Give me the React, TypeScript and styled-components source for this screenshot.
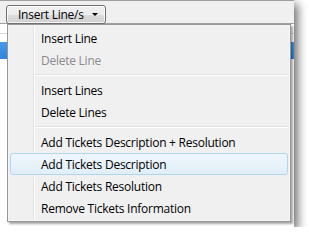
import * as React from "react";
import styled, { createGlobalStyle } from "styled-components";

const GlobalStyle = createGlobalStyle`
  html, body {
    margin: 0;
    padding: 0;
    background: #ffffff;
  }
  body {
    font-family: "Open Sans", "Noto Sans", sans-serif;
    font-size: 12px;
    letter-spacing: -0.25px;
  }
`;

const Window = styled.div`
  position: relative;
  width: 294px;
  height: 227px;
  background: #ffffff;
  box-shadow: 4px 4px 9px rgba(0, 0, 0, 0.55);
`;

const Toolbar = styled.div`
  display: flex;
  align-items: flex-start;
  height: 24px;
  box-sizing: border-box;
  padding: 4px 0 0 6px;
  background: #f0f0f0;
  border-top: 1px solid #a0a0a0;
  border-bottom: 1px solid #a0a0a0;
`;

const DropButton = styled.button`
  display: flex;
  align-items: center;
  width: 100px;
  height: 19px;
  padding: 0 0 0 11px;
  box-sizing: border-box;
  border: 1px solid #707070;
  border-radius: 3px;
  background: linear-gradient(#f2f2f2 0%, #ebebeb 50%, #dddddd 51%, #cfcfcf 100%);
  box-shadow: inset 0 0 0 1px rgba(255, 255, 255, 0.8);
  font-family: inherit;
  font-size: 12px;
  letter-spacing: inherit;
  color: #000;
  cursor: default;
`;

const ButtonLabel = styled.span`
  flex: 1;
  text-align: left;
  white-space: nowrap;
`;

const Caret = styled.span`
  width: 0;
  height: 0;
  margin-right: 7px;
  border-left: 3px solid transparent;
  border-right: 3px solid transparent;
  border-top: 3px solid #000;
`;

const Grid = styled.div`
  display: flex;
  flex-direction: column;
`;

const GridRow = styled.div<{ $height: number; $selected?: boolean; $line?: boolean }>`
  height: ${(p) => p.$height}px;
  background: ${(p) => (p.$selected ? "linear-gradient(#4a9aea, #2f84dc)" : "#fff")};
  border-bottom: ${(p) => (p.$line ? "1px solid #d8d8d8" : "none")};
`;

const Menu = styled.div`
  position: absolute;
  left: 7px;
  top: 24px;
  width: 284px;
  box-sizing: border-box;
  padding: 2px;
  border: 1px solid #979797;
  background:
    linear-gradient(
      to right,
      transparent 25px,
      #e2e3e3 25px,
      #e2e3e3 26px,
      #ffffff 26px,
      #ffffff 27px,
      transparent 27px
    ),
    #f0f0f0;
  box-shadow: inset 0 0 0 1px #f5f5f5, 2px 2px 2px rgba(0, 0, 0, 0.35);
`;

const Item = styled.div<{ $disabled?: boolean; $hover?: boolean }>`
  height: 22px;
  box-sizing: border-box;
  display: flex;
  align-items: center;
  padding-left: 30px;
  border: 1px solid ${(p) => (p.$hover ? "#b0d6ed" : "transparent")};
  border-radius: 3px;
  background: ${(p) => (p.$hover ? "linear-gradient(#f0f7fc, #e0eef8)" : "transparent")};
  color: ${(p) => (p.$disabled ? "#8b8b8b" : "#000")};
  white-space: nowrap;
`;

const Separator = styled.div`
  height: 8px;
  margin-left: 25px;
  display: flex;
  align-items: center;
  &::after {
    content: "";
    flex: 1;
    height: 1px;
    background: #e0e0e0;
    border-bottom: 1px solid #ffffff;
  }
`;

type Entry = { label: string; disabled?: boolean; hover?: boolean } | "sep";

const entries: Entry[] = [
  { label: "Insert Line" },
  { label: "Delete Line", disabled: true },
  "sep",
  { label: "Insert Lines" },
  { label: "Delete Lines" },
  "sep",
  { label: "Add Tickets Description + Resolution" },
  { label: "Add Tickets Description", hover: true },
  { label: "Add Tickets Resolution" },
  { label: "Remove Tickets Information" },
];

export default function App() {
  return (
    <>
      <GlobalStyle />
      <Window>
        <Toolbar>
          <DropButton>
            <ButtonLabel>Insert Line/s</ButtonLabel>
            <Caret />
          </DropButton>
        </Toolbar>
        <Grid>
          <GridRow $height={9} $line />
          <GridRow $height={8} />
          <GridRow $height={17} $selected />
        </Grid>
        <Menu>
          {entries.map((e, i) =>
            e === "sep" ? (
              <Separator key={i} />
            ) : (
              <Item key={i} $disabled={e.disabled} $hover={e.hover}>
                {e.label}
              </Item>
            )
          )}
        </Menu>
      </Window>
    </>
  );
}
